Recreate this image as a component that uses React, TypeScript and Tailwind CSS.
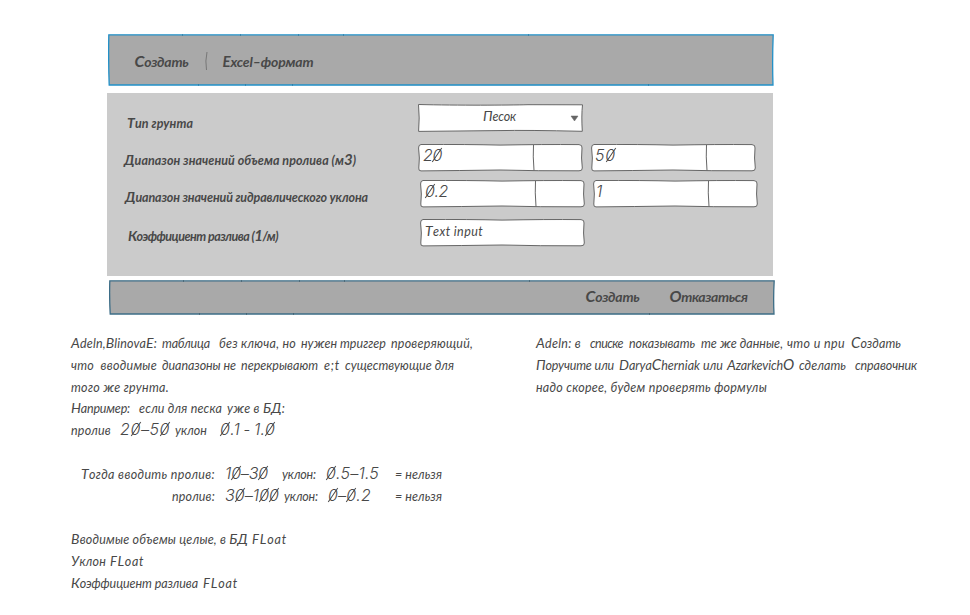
import { useLayoutEffect, useRef, useState } from 'react';

type Size = 'note' | 'label' | 'button';

const sizes: Record<Size, string> = {
  note: "text-[12.5px] [&_.cap]:text-[14px] [&_.wide]:text-[15px] [&_.low]:text-[13px] [&_.num]:text-[16px] [&_.num]:font-light [&_.num]:font-['Inter']",
  label: "text-[12.5px] font-bold [&_.cap]:text-[14px] [&_.num]:text-[15px]",
  button: "text-[14px] font-bold [&_.cap]:text-[15px] [&_.wide]:text-[16px]",
};

function kind(part: string) {
  if (/[0-9]/.test(part)) return 'num';
  if (/^[COСО]$/.test(part)) return 'wide';
  return part === 'F' ? 'low' : 'cap';
}

/* One run of lettering, tracked so that it fills the given width. */
function Run({ text, w, ml = 0, size = 'note' }: { text: string; w: number; ml?: number; size?: Size }) {
  const ref = useRef<HTMLSpanElement>(null);
  const [tracking, setTracking] = useState(0);
  useLayoutEffect(() => {
    const el = ref.current;
    if (el) setTracking((w - el.getBoundingClientRect().width) / text.length);
  }, []);
  return (
    <span className="block shrink-0 whitespace-pre" style={{ width: w, marginLeft: ml }}>
      <span ref={ref} className={`inline-block italic leading-[22px] ${sizes[size]}`} style={{ letterSpacing: tracking }}>
        {text.split(/([A-ZА-Я]|[0-9.–]*[0-9][0-9.–]*)/).map((part, i) =>
          i % 2 ? (
            <span key={i} className={kind(part)}>
              {part.split(/(0)/).map((d, k) =>
                d === '0' ? (
                  <span key={k} className="relative after:absolute after:top-1/2 after:left-1/2 after:h-[17px] after:w-px after:-translate-x-1/2 after:-translate-y-1/2 after:rotate-[34deg] after:bg-current after:content-['']">0</span>
                ) : (
                  d
                ),
              )}
            </span>
          ) : (
            part
          ),
        )}
      </span>
    </span>
  );
}

/* Hand-drawn field outline with an optional spinner divider. */
function Field({ children, split = false, square = false }: { children: React.ReactNode; split?: boolean; square?: boolean }) {
  return (
    <div className="relative h-7 w-[165px] shrink-0">
      <svg className="absolute top-0 left-0" width="165" height="28" viewBox="0 0 165 28" fill="none" stroke="#666" strokeWidth="1">
        {square ? (
          <path fill="#fff" d="M.5.5C40 1.500 90 1.200 110 .7L164.500 .8Q163.300 12 164.300 27.300Q110 26 80 26.600L.6 27.400Q1.800 14 .5.5Z" />
        ) : (
          <path fill="#fff" d="M3 .5Q50 .3 82 1.100Q125 .3 161 .6Q164.500 .8 164 4Q163 14 164.300 24Q164.500 27 161 26.800Q120 27 82 26Q40 26.600 3 26.900Q.4 27 .8 24Q2 14 .6 4Q.4 .8 3 .5Z" />
        )}
        {split && <path d="M115.500 1Q114.800 12 116 26.500" />}
        {square && <path d="M153 12h7l-3.500 5z" fill="#666" stroke="#666" strokeWidth=".5" />}
      </svg>
      <div className="relative flex -translate-y-px">{children}</div>
    </div>
  );
}

function Bar({ h, color, dark, children }: { h: number; color: string; dark: string; children: React.ReactNode }) {
  return (
    <div className="relative w-[666px]" style={{ height: h }}>
      <svg className="absolute inset-0" width="666" height={h} viewBox={`0 0 666 ${h}`} fill="none">
        <path d={`M.8 .8Q300 1.200 665.200 .8Q664.200 ${h / 2} 665 ${h - 1}Q300 ${h - 0.7} 1.200 ${h - 1}Q.3 ${h / 2} .8 .8Z`} fill="#a9a9a9" stroke={color} strokeWidth="1.300" />
        <path d={`M74 1h1M132 1h1M190 1h1M235 1h1M90 ${h - 1}h1M137 ${h - 1}h1M184 ${h - 1}h1M420 1h1M540 ${h - 1}h1`} stroke={dark} />
      </svg>
      <div className="relative flex h-full items-center">{children}</div>
    </div>
  );
}

type Seg = [text: string, w: number, ml?: number];

function Note({ lines }: { lines: Seg[][] }) {
  return (
    <div className="flex flex-col">
      {lines.map((line, i) => (
        <div key={i} className="flex h-[21.800px] items-baseline">
          {line.map(([text, w, ml], j) => (
            <Run key={j} text={text} w={w} ml={ml} />
          ))}
        </div>
      ))}
    </div>
  );
}

const tableNote: Seg[][] = [
  [['Adeln,BlinovaE:', 86], ['таблица', 48, 5], ['без ключа, но', 77, 9], ['нужен триггер', 85, 5], ['проверяющий,', 82, 5]],
  [['что  вводимые', 86], ['диапазоны не', 74, 5], ['перекрывают', 77, 5], ['e;t', 16, 6], ['существующие для', 109, 5]],
  [['того же грунта.', 98]],
  [['Например:', 59], ['если для песка', 83, 9], ['уже в БД:', 58, 5]],
  [['пролив', 40], ['20–50', 50, 9], ['уклон', 32, 5], ['0.1 – 1.0', 55, 13]],
  [],
  [['Тогда вводить пролив:', 134, 10], ['10–30', 43, 10], ['уклон:', 34, 14], ['0.5–1.5', 53, 10], ['= нельзя', 47, 16]],
  [['пролив:', 43, 101], ['30–100', 54, 10], ['уклон:', 34, 5], ['0–0.2', 43, 10], ['= нельзя', 47, 24]],
  [],
  [['Вводимые объемы целые, в БД', 177], ['FLoat', 35, 4]],
  [['Уклон', 35], ['FLoat', 34, 4]],
  [['Коэффициент разлива', 127], ['FLoat', 35, 5]],
];

const listNote: Seg[][] = [
  [['Adeln: в', 45], ['списке', 33, 9], ['показывать', 66, 6], ['те же данные,', 82, 6], ['что и при', 58, 4], ['Создать', 50, 6]],
  [['Поручите или', 78], ['DaryaCherniak или', 104, 5], ['AzarkevichO', 67, 4], ['сделать', 47, 5], ['справочник', 62, 9]],
  [['надо скорее, будем проверять формулы', 231]],
];

export default function App() {
  return (
    <div className="h-[615px] w-[970px] overflow-hidden bg-white pt-[34px] font-['Lato','Noto_Sans',sans-serif] text-[#484848]">
      <div className="ml-[107.500px]">
        <Bar h={52} color="#2190c8" dark="#176a96">
          <div className="flex translate-y-px items-center">
            <Run text="Создать" w={54} ml={27} size="button" />
            <svg className="ml-[15px]" width="4" height="18" fill="none" stroke="#777"><path d="M3 0Q1 9 2.500 18" /></svg>
            <Run text="Excel–формат" w={91} ml={15} size="button" />
          </div>
        </Bar>
      </div>

      <div className="mt-[7px] ml-[107px] h-[183px] w-[666px] bg-[#cbcbcb] pt-[11px]">
        <div className="flex h-10">
          <div className="w-[311px] pt-[6px]"><Run text="Тип грунта" w={66} ml={20} size="label" /></div>
          <Field square><Run text="Песок" w={33} ml={65} /></Field>
        </div>
        <div className="flex h-9 gap-2">
          <div className="w-[303px] pt-[3px]"><Run text="Диапазон значений объема пролива (м3)" w={232} ml={17} size="label" /></div>
          <Field split><Run text="20" w={19} ml={5} /></Field>
          <Field split><Run text="50" w={21} ml={4} /></Field>
        </div>
        <div className="flex h-[39px] gap-2">
          <div className="w-[305px] pt-1"><Run text="Диапазон значений гидравлического уклона" w={243} ml={18} size="label" /></div>
          <Field split><Run text="0.2" w={23} ml={5} /></Field>
          <Field split><Run text="1" w={4} ml={3} /></Field>
        </div>
        <div className="flex">
          <div className="w-[313px] pt-1"><Run text="Коэффициент разлива (1/м)" w={150} ml={21} size="label" /></div>
          <Field><Run text="Text input" w={58} ml={5} /></Field>
        </div>
      </div>

      <div className="mt-1 ml-[108.500px]">
        <Bar h={35} color="#3c6d87" dark="#2f4a58">
          <div className="flex -translate-y-[2px]">
            <Run text="Создать" w={54} ml={477} size="button" />
            <Run text="Отказаться" w={78} ml={30} size="button" />
          </div>
        </Bar>
      </div>

      <div className="mt-[15px] flex pl-[71px]">
        <div className="w-[465px]"><Note lines={tableNote} /></div>
        <Note lines={listNote} />
      </div>
    </div>
  );
}
